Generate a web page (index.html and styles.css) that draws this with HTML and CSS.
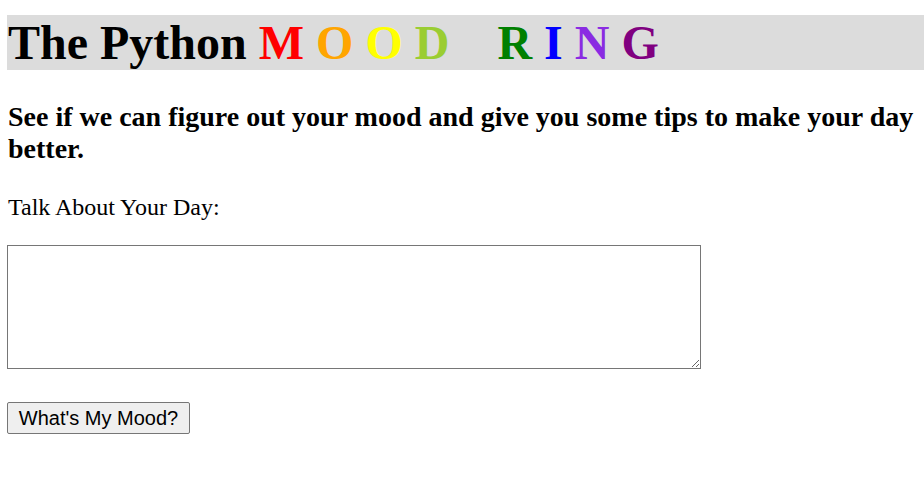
FILE: index.html
```html
<!DOCTYPE html>
<html>
<head>
<meta charset="utf-8">
<title>The Python Mood Ring</title>
<link rel="stylesheet" href="styles.css">
</head>
<body>
<h1 class="title">The Python <span class="c-red">M</span> <span class="c-orange">O</span> <span class="c-yellow">O</span> <span class="c-yellowgreen">D</span> &nbsp; &nbsp;<span class="c-green">R</span> <span class="c-blue">I</span> <span class="c-violet">N</span> <span class="c-purple">G</span></h1>
<h2 class="subtitle">See if we can figure out your mood and give you some tips to make your day better.</h2>
<form class="mood-form">
<label class="label" for="day">Talk About Your Day:</label>
<textarea id="day" class="day-input"></textarea>
<button type="button" class="mood-btn">What's My Mood?</button>
</form>
</body>
</html>
```
FILE: styles.css
```css
html, body {
  margin: 0;
  padding: 0;
  background: #ffffff;
}
body {
  padding: 0 0 0 7px;
  font-family: "Liberation Serif", "Times New Roman", serif;
  color: #000;
}
.title {
  margin: 15px 0 0 0;
  background: #dcdcdc;
  font-size: 48px;
  font-weight: bold;
  height: 55px;
  line-height: 55px;
  padding-left: 1px;
  white-space: nowrap;
}
.c-red { color: #ff0000; }
.c-orange { color: #ffa500; }
.c-yellow { color: #ffff00; }
.c-yellowgreen { color: #9acd32; }
.c-green { color: #008000; }
.c-blue { color: #0000ff; }
.c-violet { color: #8a2be2; }
.c-purple { color: #800080; }
.subtitle {
  margin: 31px 0 0 1px;
  font-size: 28px;
  font-weight: bold;
  line-height: 32px;
}
.mood-form {
  display: flex;
  flex-direction: column;
  align-items: flex-start;
}
.label {
  margin: 29px 0 0 1px;
  font-size: 24px;
  line-height: 26px;
}
.day-input {
  box-sizing: border-box;
  margin-top: 25px;
  width: 694px;
  height: 124px;
  border: 1px solid #767676;
  padding: 2px;
  font-family: "Liberation Mono", monospace;
}
.mood-btn {
  box-sizing: border-box;
  margin-top: 33px;
  width: 183px;
  height: 32px;
  padding: 0;
  font-family: "Liberation Sans", Arial, sans-serif;
  font-size: 20px;
  color: #000;
  background: #efefef;
  border: 1px solid #767676;
  border-radius: 2px;
}
```
